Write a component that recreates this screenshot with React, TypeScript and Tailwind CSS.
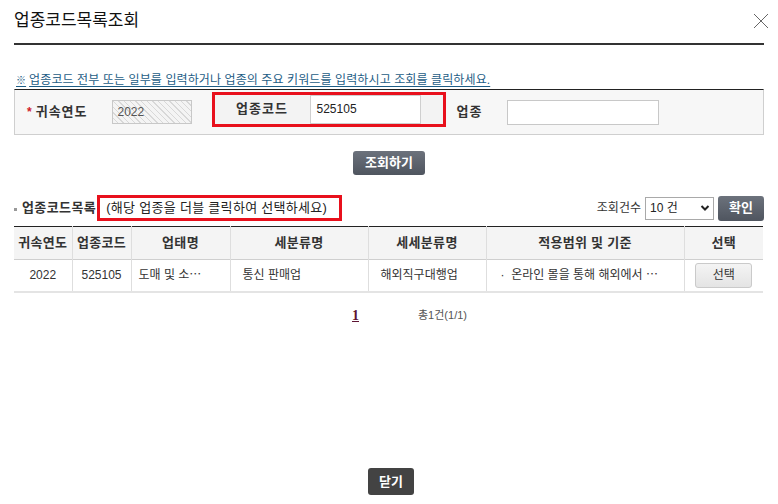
import React from 'react';

const font = "font-['Liberation_Sans','Noto_Sans_CJK_KR',sans-serif]";

const cols = [
  { label: '귀속연도', w: 'w-[58px]' },
  { label: '업종코드', w: 'w-[59px]' },
  { label: '업태명', w: 'w-[99px]' },
  { label: '세분류명', w: 'w-[138px]' },
  { label: '세세분류명', w: 'w-[118px]' },
  { label: '적용범위 및 기준', w: 'w-[198px]' },
  { label: '선택', w: 'w-[79px]' },
];

const App = () => {
  return (
    <div className={`w-[778px] h-[504px] bg-white flex flex-col text-[#333] ${font}`}>
      {/* title */}
      <div className="mx-[14px] h-[45px] flex items-center justify-between border-b-2 border-[#333]">
        <h1 className="text-[17px] leading-[20px] text-[#111] -mt-[2px]">업종코드목록조회</h1>
        <button className="mr-[-6px] -mt-[2px]">
          <svg width="18" height="18" viewBox="0 0 18 18">
            <path d="M2 2 L16 16 M16 2 L2 16" stroke="#666" strokeWidth="1" fill="none" />
          </svg>
        </button>
      </div>

      <p className="mx-[14px] mt-[28px] pl-[2px] text-[12px] leading-[15px] text-[#1d5d85] underline underline-offset-2 tracking-[0.1px]">
        <span className="text-[10px] mr-[3px] font-bold">※</span>업종코드 전부 또는 일부를 입력하거나 업종의 주요 키워드를 입력하시고 조회를 클릭하세요.
      </p>

      {/* search box */}
      <div className="mx-[14px] mt-[1px] h-[46px] border border-[#cfcfcf] border-t-[#222] bg-[#f7f7f7] flex items-center">
        <span className="ml-[12px] text-[#d0202a] text-[12px] font-bold">*</span>
        <span className="ml-[4px] text-[13px] font-bold tracking-[1px]">귀속연도</span>
        <div className="ml-[24px] w-[80px] h-[24px] border border-[#c8c8c8] bg-[repeating-linear-gradient(45deg,#f4f4f4_0px,#f4f4f4_3px,#d8d8d8_3px,#d8d8d8_4px)] flex items-center pl-[5px] text-[12px] text-[#555]">
          2022
        </div>
        <div className="ml-[20px] h-[35px] border-[3px] border-[#e8101c] flex -mt-[6px]">
          <div className="w-[95px] bg-[#f3f3f3] flex items-center justify-center text-[13px] font-bold tracking-[1px]">업종코드</div>
          <div className="w-[111px] bg-white border border-[#cfcfcf] flex items-center pl-[6px] text-[12px] text-[#222]">525105</div>
          <div className="w-[22px] bg-[#f3f3f3]" />
        </div>
        <span className="ml-[11px] text-[13px] font-bold tracking-[1px]">업종</span>
        <div className="ml-[25px] w-[152px] h-[25px] border border-[#c8c8c8] bg-white" />
      </div>

      {/* search button */}
      <div className="mt-[16px] flex justify-center">
        <button className="w-[72px] h-[24px] rounded-[3px] bg-gradient-to-b from-[#6c727c] to-[#4f555f] text-white text-[13px] font-bold leading-[24px]">
          조회하기
        </button>
      </div>

      {/* list header */}
      <div className="mx-[14px] mt-[20px] h-[26px] flex items-center">
        <span className="w-[3px] h-[3px] bg-[#999] mt-[2px]" />
        <span className="ml-[5px] text-[13px] font-bold tracking-[0.4px]">업종코드목록</span>
        <div className="ml-[1px] h-[26px] w-[245px] border-[3px] border-[#e8101c] flex items-center pl-[6px] text-[13px] tracking-[0.3px] text-[#222]">
          (해당 업종을 더블 클릭하여 선택하세요)
        </div>
        <div className="ml-auto flex items-center">
          <span className="text-[12px] text-[#333]">조회건수</span>
          <div className="ml-[4px] w-[69px] h-[23px] border border-[#a9a9a9] bg-white flex items-center justify-between pl-[4px] pr-[3px] text-[12px] text-[#222]">
            <span>10 건</span>
            <svg width="10" height="8" viewBox="0 0 10 8">
              <path d="M1.5 2 L5 5.5 L8.5 2" stroke="#222" strokeWidth="2" fill="none" />
            </svg>
          </div>
          <button className="ml-[4px] w-[46px] h-[25px] rounded-[3px] bg-gradient-to-b from-[#6c727c] to-[#4f555f] text-white text-[13px] font-bold">
            확인
          </button>
        </div>
      </div>

      {/* table */}
      <table className="mx-[14px] mt-[5px] w-[749px] border-collapse table-fixed">
        <thead>
          <tr className="h-[33px] bg-[#f4f4f4] border-t border-t-[#222] border-b border-b-[#cfcfcf]">
            {cols.map((c, i) => (
              <th
                key={c.label}
                className={`${c.w} p-0 text-[13px] font-bold text-[#333] text-center tracking-[0.3px] ${i < cols.length - 1 ? 'border-r border-[#dedede]' : ''}`}
              >
                {c.label}
              </th>
            ))}
          </tr>
        </thead>
        <tbody>
          <tr className="h-[32px] border-b-2 border-[#e4e4e4] text-[12px] text-[#333]">
            <td className="text-center border-r border-[#dedede]">2022</td>
            <td className="text-center border-r border-[#dedede]">525105</td>
            <td className="pl-[7px] border-r border-[#dedede] whitespace-nowrap">도매 및 소⋯</td>
            <td className="pl-[12px] border-r border-[#dedede]">통신 판매업</td>
            <td className="pl-[12px] border-r border-[#dedede]">해외직구대행업</td>
            <td className="pl-[14px] border-r border-[#dedede] whitespace-nowrap">·&nbsp;&nbsp;온라인 몰을 통해 해외에서 ⋯</td>
            <td className="text-center">
              <button className="w-[57px] h-[25px] rounded-[3px] border border-[#cacaca] bg-gradient-to-b from-[#f4f4f4] to-[#e4e4e4] text-[12px] text-[#333]">
                선택
              </button>
            </td>
          </tr>
        </tbody>
      </table>

      {/* pagination */}
      <div className="mt-[15px] flex items-center h-[16px] text-[12px]">
        <span className="ml-[352px] font-['Liberation_Serif',serif] font-bold text-[14px] text-[#5e1533] underline">1</span>
        <span className="ml-[59px] text-[11px] text-[#555]">총1건(1/1)</span>
      </div>

      {/* footer */}
      <div className="mt-auto mb-[9px] flex justify-center">
        <button className="ml-[4px] w-[46px] h-[27px] rounded-[3px] bg-[#434343] text-white text-[13px] font-bold">
          닫기
        </button>
      </div>
    </div>
  );
};

export default App;
